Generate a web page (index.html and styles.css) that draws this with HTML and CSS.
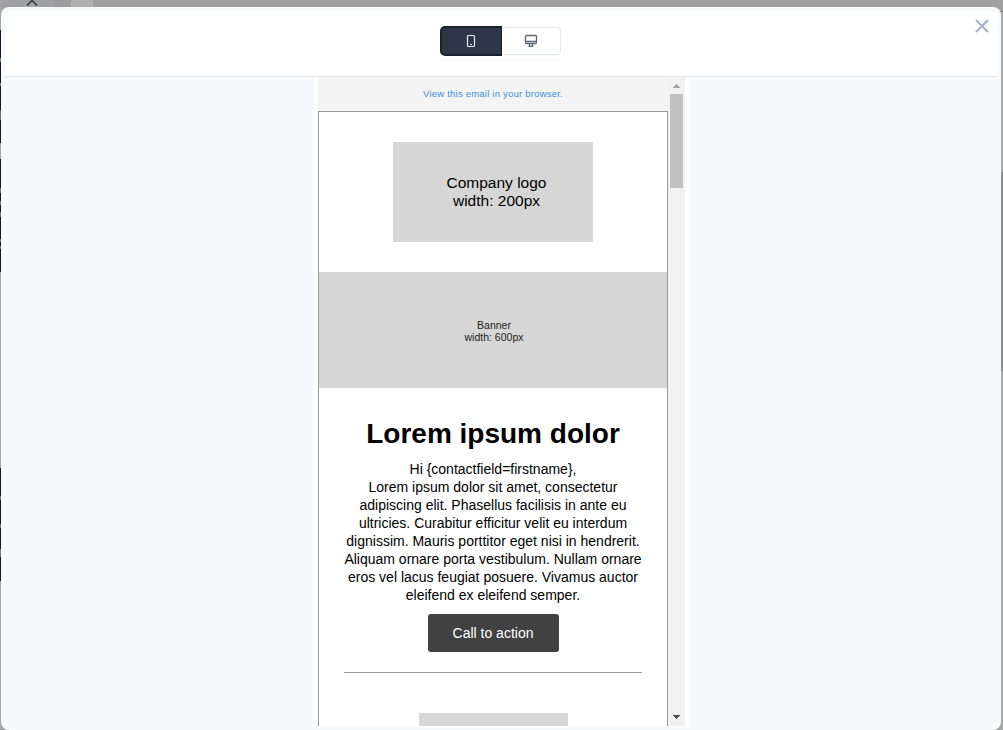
FILE: index.html
```html
<!DOCTYPE html>
<html lang="en">
<head>
	<meta charset="UTF-8"/>
	<title>Email preview</title>
	<link rel="stylesheet" href="styles.css">
</head>
<body>

<div class="page">
	<!-- page behind the modal -->
	<svg class="page-caret" width="14" height="7" viewBox="0 0 14 7"><path d="M2 5.5 L7 .5 L12 5.5"/></svg>

	<div class="modal">
		<div class="modal-header">
			<div class="switch">
				<button class="switch-btn on" aria-label="Mobile">
					<svg width="10" height="14" viewBox="0 0 10 14"><rect x="1.5" y="1.5" width="7" height="11" rx="1"/><path d="M4 10.5h2"/></svg>
				</button>
				<button class="switch-btn" aria-label="Desktop">
					<svg width="14" height="14" viewBox="0 0 14 14"><rect x="1.5" y="1.5" width="11" height="8" rx="1"/><path d="M1.5 7.5h11M5.5 9.5v3M8.5 9.5v3M4.5 12.3h5"/></svg>
				</button>
			</div>
			<button class="close" aria-label="Close">
				<svg width="16" height="16" viewBox="0 0 16 16"><path d="M2 2 L14 14 M14 2 L2 14"/></svg>
			</button>
		</div>

		<div class="device">
			<div class="email">
				<div class="browser-link"><a href="#">View this email in your browser.</a></div>
				<div class="email-body">
					<div class="logo">Company logo<br>width: 200px</div>
					<div class="banner">Banner<br>width: 600px</div>
					<h1>Lorem ipsum dolor</h1>
					<p>Hi {contactfield=firstname},<br>
					Lorem ipsum dolor sit amet, consectetur<br>
					adipiscing elit. Phasellus facilisis in ante eu<br>
					ultricies. Curabitur efficitur velit eu interdum<br>
					dignissim. Mauris porttitor eget nisi in hendrerit.<br>
					Aliquam ornare porta vestibulum. Nullam ornare<br>
					eros vel lacus feugiat posuere. Vivamus auctor<br>
					eleifend ex eleifend semper.</p>
					<a class="cta" href="#">Call to action</a>
					<hr>
					<div class="picture"></div>
				</div>
			</div>
			<div class="scrollbar">
				<svg width="17" height="17" viewBox="0 0 17 17" shape-rendering="crispEdges"><path class="arrow-up" d="M5 11h7v-1h-1v-1h-1v-1h-1v-1h-1v1h-1v1h-1v1h-1z"/></svg>
				<div class="thumb"></div>
				<svg class="down" width="17" height="17" viewBox="0 0 17 17" shape-rendering="crispEdges"><path class="arrow-down" d="M5 6h7v1h-1v1h-1v1h-1v1h-1v-1h-1v-1h-1v-1h-1z"/></svg>
			</div>
		</div>
	</div>
</div>

</body>
</html>
```

FILE: styles.css
```css
*{
	box-sizing:border-box;
	margin:0;
	padding:0;
}
body{
	font-family:"Liberation Sans", Arial, sans-serif;
	overflow:hidden;
}
.page{
	position:relative;
	width:1003px;
	height:730px;
	padding:7px 2px 0 1px;
	background-color:#a3a3a3;
	/* left edge, right scrollbar, top strip */
	background-image:
		linear-gradient(#a8a6a6 30px, #15171f 30px, #15171f 58px, #77787c 58px, #77787c 62px, #15171f 62px, #15171f 83px, #77787c 83px, #77787c 86px, #15171f 86px, #15171f 110px, #6b6b6e 110px, #6b6b6e 120px, #15171f 120px, #15171f 143px, #a8a6a6 143px, #a8a6a6 159px, #15171f 159px, #15171f 188px, #77787c 188px, #77787c 193px, #15171f 193px, #15171f 201px, #77787c 201px, #77787c 205px, #15171f 205px, #15171f 212px, #77787c 212px, #77787c 217px, #15171f 217px, #15171f 239px, #77787c 239px, #77787c 242px, #15171f 242px, #15171f 246px, #77787c 246px, #77787c 249px, #15171f 249px, #15171f 272px, #a8a6a6 272px, #a8a6a6 468px, #15171f 468px, #15171f 496px, #77787c 496px, #77787c 500px, #15171f 500px, #15171f 524px, #77787c 524px, #77787c 528px, #15171f 528px, #15171f 549px, #77787c 549px, #77787c 557px, #15171f 557px, #15171f 581px, #a8a6a6 581px),
		linear-gradient(#a3a3a3 11px, #6f6f6f 11px, #6f6f6f 12px, #a9a9a9 12px, #a9a9a9 172px, #8c8c8c 172px, #8c8c8c 371px, #a9a9a9 371px),
		linear-gradient(90deg, #a0a0a4 54px, #9c9c9c 54px, #9c9c9c 71px, #b1b1b1 71px, #b1b1b1 93px, #a0a0a0 93px);
	background-size:1px 730px, 2px 730px, 100% 10px;
	background-position:0 0, 100% 0, 0 0;
	background-repeat:no-repeat;
}
.page-caret{
	position:absolute;
	left:25px;
	top:0;
	fill:none;
	stroke:#2d3440;
	stroke-width:1.5;
}
.modal{
	height:723px;
	padding:4px;
	border-radius:8px;
	background:#f6fafd;
}
.modal-header{
	position:relative;
	height:66px;
	display:flex;
	justify-content:center;
	padding-top:15px;
	background:#fff;
	border-bottom:1px solid #dfe8ef;
}
.switch{
	display:flex;
	align-items:center;
	width:121px;
	height:35px;
	padding-bottom:5px;
	margin-right:2px;
	border-bottom:1px solid #f6f7f8;
}
.switch-btn{
	display:flex;
	align-items:center;
	justify-content:center;
	width:59px;
	height:28px;
	background:#fff;
	border:1px solid #e2e8f0;
	border-left:0;
	border-radius:0 4px 4px 0;
}
.switch-btn svg{
	fill:none;
	stroke:#5d6678;
	stroke-width:1.3;
}
.switch-btn.on{
	width:62px;
	height:30px;
	background:#2d3748;
	border:2px solid #1a202c;
	border-right-width:1px;
	border-radius:5px 0 0 5px;
}
.switch-btn.on svg{
	stroke:#e8ebef;
	stroke-width:1.2;
}
.close{
	position:absolute;
	right:7px;
	top:7px;
	width:16px;
	height:16px;
	background:none;
	border:0;
}
.close svg{
	display:block;
	stroke:#a0aec0;
	stroke-width:1.8;
}
.device{
	display:flex;
	width:375px;
	height:650px;
	margin-left:309px;
	padding:0 4px 1px;
	background:#fff;
}
.email{
	width:350px;
	height:649px;
	overflow:hidden;
	text-align:center;
	color:#000;
	background:#fff;
}
.browser-link{
	height:34px;
	line-height:34px;
	font-size:9.5px;
	letter-spacing:.22px;
	background:#f4f4f4;
}
.browser-link a{
	color:#3b8ede;
	text-decoration:none;
}
.email-body{
	height:630px;
	padding-top:30px;
	border:1px solid #999;
}
.logo{
	width:200px;
	height:100px;
	margin:0 auto 30px;
	padding:32px 0 0 7px;
	font-size:15.5px;
	line-height:18px;
	background:#d6d6d6;
}
.banner{
	height:116px;
	padding:47px 0 0 2px;
	font-size:10.5px;
	line-height:12px;
	color:#222;
	background:#d6d6d6;
}
.email-body h1{
	margin-top:29px;
	font-size:28px;
	line-height:34px;
}
.email-body p{
	margin-top:9px;
	font-size:14px;
	line-height:18px;
}
.cta{
	display:block;
	width:131px;
	height:38px;
	margin:10px auto 0 109px;
	padding-right:1px;
	font-size:14px;
	line-height:38px;
	color:#fff;
	text-decoration:none;
	background:#414141;
	border-radius:3px;
}
.email-body hr{
	margin:20px 25px 40px;
	border:0;
	border-top:1px solid #999;
}
.picture{
	width:149px;
	height:100px;
	margin-left:100px;
	background:#d6d6d6;
}
.scrollbar{
	display:flex;
	flex-direction:column;
	width:17px;
	height:649px;
	background:#f1f1f1;
}
.scrollbar svg{
	display:block;
}
.scrollbar .down{
	margin-top:auto;
}
.arrow-up{
	fill:#a3a3a3;
}
.arrow-down{
	fill:#505050;
}
.thumb{
	width:13px;
	height:94px;
	margin-left:2px;
	background:#c1c1c1;
}
```
